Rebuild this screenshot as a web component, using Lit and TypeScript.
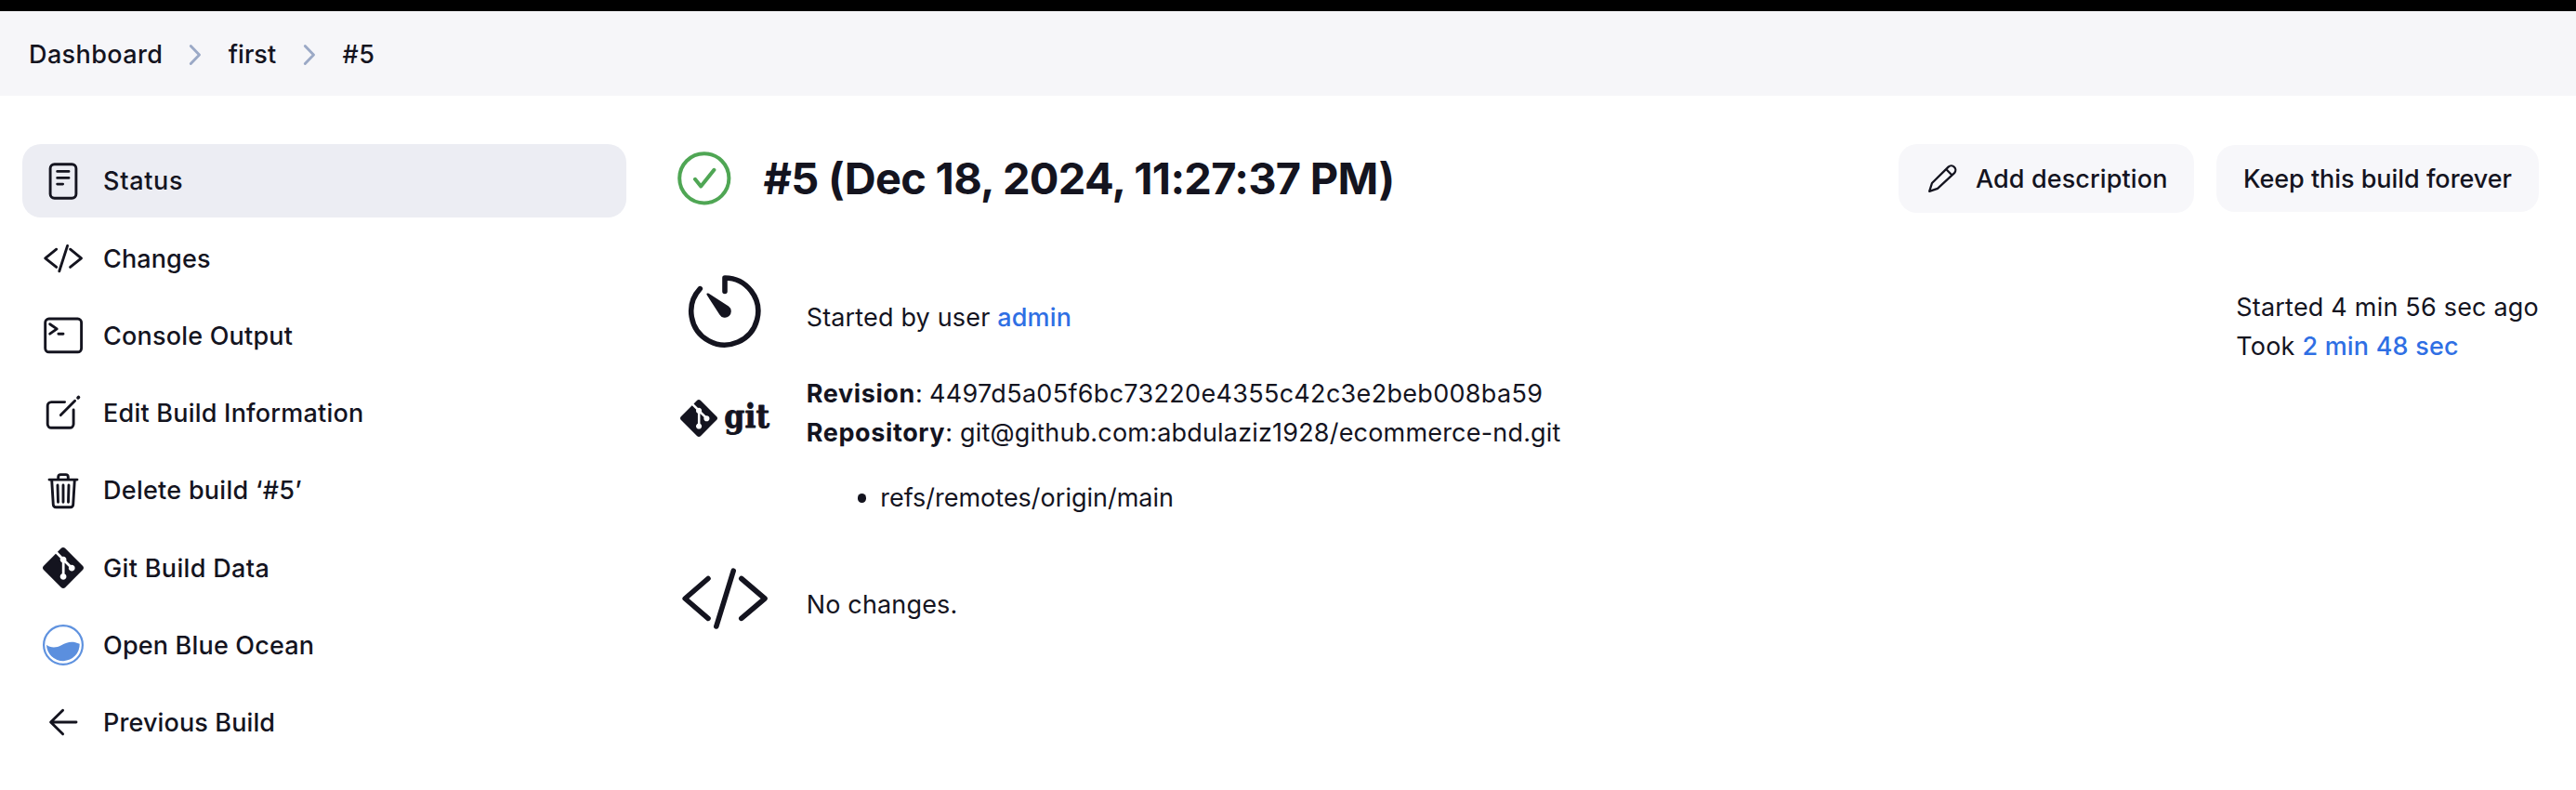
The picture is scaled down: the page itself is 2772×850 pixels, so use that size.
import { LitElement, html, css, svg, SVGTemplateResult } from "lit";
import { classMap } from "lit/directives/class-map.js";
import { styleMap } from "lit/directives/style-map.js";

const gitMark = svg`<path class="solid" d="M23.546 10.93L13.067.452c-.604-.603-1.582-.603-2.188 0L8.708 2.627l2.76 2.76c.645-.215 1.379-.07 1.889.441.516.515.658 1.258.438 1.9l2.658 2.66c.645-.223 1.387-.078 1.9.435.721.72.721 1.884 0 2.604-.719.719-1.881.719-2.6 0-.539-.541-.674-1.337-.404-1.996L12.86 8.955v6.525c.176.086.342.203.488.348.713.721.713 1.883 0 2.6-.719.721-1.889.721-2.609 0-.719-.719-.719-1.879 0-2.598.182-.18.387-.316.605-.406V8.835c-.217-.091-.424-.222-.6-.401-.545-.545-.676-1.342-.396-2.009L7.636 3.7.45 10.881c-.6.605-.6 1.584 0 2.189l10.48 10.477c.604.604 1.582.604 2.186 0l10.43-10.43c.605-.603.605-1.582 0-2.187"/>`;

interface Task {
  label: string;
  tracking: number;
  icon: SVGTemplateResult;
  active?: boolean;
}

const tasks: Task[] = [
  {
    label: "Status",
    tracking: 0.7,
    active: true,
    icon: svg`<rect x="8.1" y="3.8" width="27.8" height="36.5" rx="4.5"/><path d="M15.7 11.4H28M15.7 18.4H28M15.7 25.1H21.6"/>`,
  },
  {
    label: "Changes",
    tracking: 0.12,
    icon: svg`<path d="M14.7 12.2L2.7 21.8L14.7 31.4M29.6 12.2L41.5 21.8L29.6 31.4M26.6 8.4L17.8 35.8"/>`,
  },
  {
    label: "Console Output",
    tracking: 0.2,
    icon: svg`<rect x="2.7" y="4" width="38.9" height="35.8" rx="4"/><path d="M7.7 9.7L15.2 14.9L7.7 20.1M16.9 20.3H22"/>`,
  },
  {
    label: "Edit Build Information",
    tracking: 0.22,
    icon: svg`<path d="M23.6 10.6H9.2A4 4 0 0 0 5.2 14.6V34.3A4 4 0 0 0 9.2 38.3H29.1A4 4 0 0 0 33.1 34.3V19"/><path d="M19.4 24.6L34.6 9.3"/><path class="tip" d="M38 5.9L38.5 5.4"/>`,
  },
  {
    label: "Delete build ‘#5’",
    tracking: 0.27,
    icon: svg`<path d="M7 10.1H37M16.7 10V7A2.5 2.5 0 0 1 19.2 4.6H24.8A2.5 2.5 0 0 1 27.3 7V10M9.7 10.5L11.3 37A3 3 0 0 0 14.3 39.8H29.7A3 3 0 0 0 32.7 37L34.3 10.5M16 16L16.5 34.3M22 16V34.3M28 16L27.5 34.3"/>`,
  },
  {
    label: "Git Build Data",
    tracking: 0.34,
    icon: svg`<g transform="scale(1.8333)">${gitMark}</g>`,
  },
  {
    label: "Open Blue Ocean",
    tracking: 0.18,
    icon: svg`<circle class="ocean-ring" cx="22" cy="22" r="20.9"/><path class="ocean-wave" d="M4 21.8C8 25.2 14.5 25.4 20 22.3C27 18.3 32 17.6 39.7 20.8A17.8 17.8 0 0 1 4 21.8Z"/>`,
  },
  {
    label: "Previous Build",
    tracking: 0.12,
    icon: svg`<path d="M36 22H9M21.6 9.3L8.6 22L21.6 34.7"/>`,
  },
];

const chevron = html`<svg class="chevron" viewBox="0 0 14 24" width="14" height="24"><path d="M2.3 2.6L11.5 12L2.3 21.4"/></svg>`;

class AppRoot extends LitElement {
  static styles = css`
    :host {
      display: block;
      min-height: 850px;
      box-sizing: border-box;
      background: #fff;
      color: #14141f;
      font: 400 27px/42.2px Inter, "Liberation Sans", sans-serif;
      letter-spacing: 0.22px;
      white-space: nowrap;
    }
    * { box-sizing: border-box; }
    svg { display: block; flex: none; overflow: visible; fill: none; stroke: currentColor; stroke-linecap: round; stroke-linejoin: round; }
    .solid { fill: currentColor; stroke: none; }
    .strip { height: 12px; background: #000; }
    .crumbs {
      height: 91px;
      padding: 2px 0 0 31px;
      display: flex;
      align-items: center;
      gap: 28.7px;
      background: #f6f6f9;
      font-weight: 500;
    }
    .crumbs span { padding-top: 1.5px; }
    .crumb-home { letter-spacing: 0.4px; margin-right: -1px; }
    .crumb-job { letter-spacing: 0; }
    .crumb-build { letter-spacing: 0.5px; }
    .chevron { stroke: #9ba9c6; stroke-width: 2.9; }
    .page { display: grid; grid-template-columns: 650px 1fr; column-gap: 55px; padding: 52px 40px 0 24px; }
    .tasks { display: flex; flex-direction: column; gap: 4.25px; }
    .task { height: 79px; display: flex; align-items: center; gap: 21px; padding-left: 22px; border-radius: 20px; font-weight: 500; stroke-width: 2.9; }
    .task span { padding-top: 2px; }
    .task.active { background: #ecedf3; }
    .tip { stroke-width: 3.6; }
    .ocean-ring { stroke: #5f92df; stroke-width: 2.2; }
    .ocean-wave { fill: #5b8fde; stroke: none; }
    .title-row { height: 74px; display: flex; align-items: center; }
    .ok { stroke: #4fa654; stroke-width: 4; }
    h1 { margin: 0 auto 0 34.5px; font-size: 47px; line-height: 60px; font-weight: 700; letter-spacing: -0.73px; }
    .button { display: flex; align-items: center; border-radius: 20px; background: #f7f7fa; font-weight: 500; }
    .describe { height: 74px; width: 318px; padding-left: 32px; gap: 21px; letter-spacing: 0.1px; }
    .describe svg { stroke-width: 2.3; }
    .describe span { padding-top: 1.5px; }
    .keep { height: 72px; width: 347px; margin-left: 24px; padding: 2.5px 0 0 29px; letter-spacing: -0.04px; }
    .body { display: flex; justify-content: space-between; align-items: flex-start; padding-top: 58px; }
    .facts { display: grid; row-gap: 19px; }
    .fact { display: grid; grid-template-columns: 96px auto; column-gap: 39.7px; padding-left: 3px; min-height: 96px; align-items: start; }
    .fact.source { min-height: 175px; }
    .cause, .nochange { padding-top: 33.5px; }
    .cause { letter-spacing: 0.16px; }
    .revision { padding-top: 1px; }
    .nochange { letter-spacing: 0.16px; }
    .art { stroke-width: 5.6; }
    .wordmark { font: 700 36px "DejaVu Serif", serif; fill: currentColor; stroke-width: 0.9; letter-spacing: 0; }
    a { color: #2f6fe4; font-weight: 500; text-decoration: none; }
    b { font-weight: 700; letter-spacing: 0.62px; }
    .colon { letter-spacing: -0.5px; }
    .hash { letter-spacing: 0.31px; }
    .repo { letter-spacing: 0.19px; }
    ul { list-style: none; margin: 27.5px 0 0; padding: 0 0 0 55px; letter-spacing: 0; }
    li { display: flex; align-items: center; gap: 15px; }
    .bullet { width: 9.5px; height: 9.5px; border-radius: 50%; background: currentColor; }
    .timing { padding-top: 23px; letter-spacing: 0.2px; }
  `;

  render() {
    return html`
      <div class="strip"></div>
      <nav class="crumbs">
        <span class="crumb-home">Dashboard</span>${chevron}<span class="crumb-job">first</span>${chevron}<span class="crumb-build">#5</span>
      </nav>
      <div class="page">
        <nav class="tasks">
          ${tasks.map(
            (t) => html`<div class=${classMap({ task: true, active: !!t.active })}>
              <svg viewBox="0 0 44 44" width="44" height="44">${t.icon}</svg>
              <span style=${styleMap({ letterSpacing: `${t.tracking}px` })}>${t.label}</span>
            </div>`
          )}
        </nav>
        <main>
          <header class="title-row">
            <svg class="ok" viewBox="0 0 58 58" width="58" height="58"><circle cx="28.8" cy="28.8" r="26.6"/><path d="M19 29.8L25.2 37.4L39.4 19.8"/></svg>
            <h1>#5 (Dec 18, 2024, 11:27:37 PM)</h1>
            <div class="button describe">
              <svg viewBox="0 0 30 30" width="30" height="30"><path d="M1.2 28.8L4 20L21.6 2.6A4.6 4.6 0 0 1 28.1 9.1L10 25.8ZM19.4 5.3L25.3 11.2"/></svg>
              <span>Add description</span>
            </div>
            <div class="button keep"><span>Keep this build forever</span></div>
          </header>
          <section class="body">
            <div class="facts">
              <div class="fact">
                <svg class="art" viewBox="0 0 96 96" width="96" height="96"><path d="M48 26.5V12A36 36 0 1 1 21.3 23.6"/><path class="solid" d="M28.6 30.3L42.3 51.4A6.7 6.7 0 1 0 52 42.6L30.3 28.6Q27.8 28 28.6 30.3Z"/></svg>
                <div class="cause">Started by user <a>admin</a></div>
              </div>
              <div class="fact source">
                <svg class="art" viewBox="0 0 96 96" width="96" height="96"><g transform="translate(0 28) scale(1.6667)">${gitMark}</g><text class="wordmark" x="47.3" y="57.7" textLength="48.7" lengthAdjust="spacingAndGlyphs">git</text></svg>
                <div class="revision">
                  <div><b>Revision</b><span class="colon">:</span> <span class="hash">4497d5a05f6bc73220e4355c42c3e2beb008ba59</span></div>
                  <div><b>Repository</b>: <span class="repo">git@github.com:abdulaziz1928/ecommerce-nd.git</span></div>
                  <ul><li><span class="bullet"></span>refs/remotes/origin/main</li></ul>
                </div>
              </div>
              <div class="fact">
                <svg class="art" viewBox="0 0 96 96" width="96" height="96"><path d="M30 26.5L5.2 48L30 69.4M65.8 26.5L91 48L65.8 69.4M57.2 18.2L38.8 78"/></svg>
                <div class="nochange">No changes.</div>
              </div>
            </div>
            <div class="timing">
              <div>Started 4 min 56 sec ago</div>
              <div>Took <a>2 min 48 sec</a></div>
            </div>
          </section>
        </main>
      </div>
    `;
  }
}
customElements.define("app-root", AppRoot);
